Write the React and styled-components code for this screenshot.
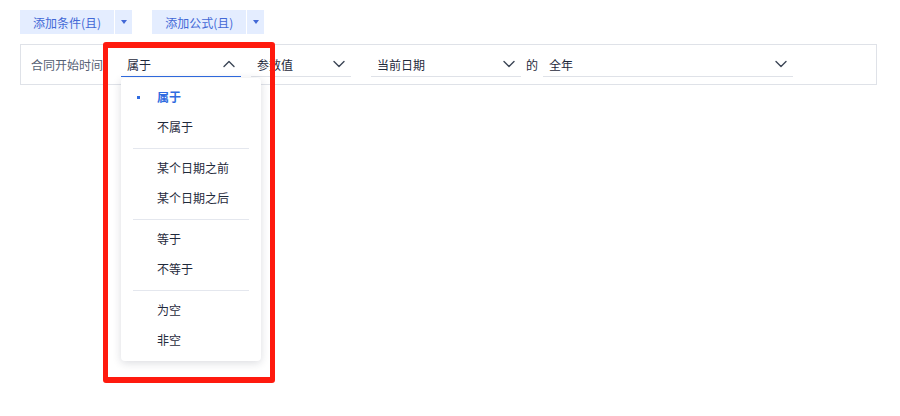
import React from "react";
import styled, { createGlobalStyle } from "styled-components";

const Global = createGlobalStyle`
  html, body { margin: 0; padding: 0; background: #fff; }
  body { font-family: "Noto Sans CJK SC", "Noto Sans", sans-serif; font-size: 12px; color: #1f2a3c; }
`;

const Page = styled.div`
  position: relative;
  padding: 10px 23px 0 20px;
  width: 900px;
  height: 416px;
  box-sizing: border-box;
`;

const Toolbar = styled.div`
  display: flex;
  gap: 20px;
  height: 24px;
`;

const SplitButton = styled.div`
  display: flex;
  gap: 1px;
  height: 24px;
`;

const MainPart = styled.button`
  all: unset;
  box-sizing: border-box;
  height: 24px;
  padding: 0 13px;
  background: #e4edff;
  color: #4268d6;
  font-size: 12px;
  display: flex;
  align-items: center;
  cursor: pointer;
`;

const ArrowPart = styled.button`
  all: unset;
  box-sizing: border-box;
  width: 17px;
  height: 24px;
  background: #e4edff;
  display: flex;
  align-items: center;
  justify-content: center;
  &::after {
    content: "";
    border-left: 3px solid transparent;
    border-right: 3px solid transparent;
    border-top: 4px solid #4268d6;
  }
`;

const FilterBox = styled.div`
  margin-top: 10px;
  height: 41px;
  box-sizing: border-box;
  border: 1px solid #dfe2e8;
  display: flex;
  align-items: center;
  padding-left: 10px;
`;

const Label = styled.span`
  color: #566175;
  font-size: 12px;
  width: 90px;
  flex: none;
`;

const Select = styled.div`
  position: relative;
  box-sizing: border-box;
  width: ${(p) => p.$w}px;
  margin-right: ${(p) => p.$mr || 0}px;
  height: 24px;
  padding: 0 6px;
  display: flex;
  align-items: center;
  justify-content: space-between;
  border-bottom: 1px solid ${(p) => (p.$open ? "#2f6be0" : "#dfe2e8")};
  font-size: 12px;
  color: #1f2a3c;
  flex: none;
`;

const Of = styled.span`
  margin-right: 5px;
  color: #1f2a3c;
  font-size: 12px;
`;

const Chevron = ({ up }) => (
  <svg width="12" height="12" viewBox="0 0 12 12" fill="none">
    <path
      d={up ? "M1 8.5 L6 3.5 L11 8.5" : "M1 3.5 L6 8.5 L11 3.5"}
      stroke="#3c4656"
      strokeWidth="1.4"
      strokeLinecap="round"
      strokeLinejoin="round"
    />
  </svg>
);

const Menu = styled.div`
  position: absolute;
  left: 0;
  top: calc(100% + 2px);
  width: 140px;
  box-sizing: border-box;
  background: #fff;
  border-radius: 4px;
  box-shadow: 0 2px 8px rgba(30, 40, 60, 0.16);
  padding: 4px 0 6px;
  z-index: 2;
`;

const Item = styled.div`
  position: relative;
  height: 30px;
  display: flex;
  align-items: center;
  padding-left: 36px;
  font-size: 12px;
  color: ${(p) => (p.$active ? "#2f6be0" : "#1f2a3c")};
  font-weight: ${(p) => (p.$active ? 700 : 400)};
  &::before {
    content: "";
    display: ${(p) => (p.$active ? "block" : "none")};
    position: absolute;
    left: 16px;
    top: 14px;
    width: 3px;
    height: 3px;
    background: #2f6be0;
  }
`;

const Divider = styled.div`
  height: 1px;
  background: #e4e7ee;
  margin: 6px 12px 4px;
`;

const Highlight = styled.div`
  position: absolute;
  left: 103px;
  top: 42px;
  width: 172px;
  height: 341px;
  box-sizing: border-box;
  border: solid #ff1a0e;
  border-width: 6px 5px;
  border-radius: 3px;
  pointer-events: none;
  z-index: 5;
`;

const groups = [
  ["属于", "不属于"],
  ["某个日期之前", "某个日期之后"],
  ["等于", "不等于"],
  ["为空", "非空"],
];

export default function App() {
  return (
    <Page>
      <Global />
      <Toolbar>
        <SplitButton>
          <MainPart>添加条件(且)</MainPart>
          <ArrowPart />
        </SplitButton>
        <SplitButton>
          <MainPart>添加公式(且)</MainPart>
          <ArrowPart />
        </SplitButton>
      </Toolbar>
      <FilterBox>
        <Label>合同开始时间</Label>
        <Select $w={120} $mr={10} $open>
          <span>属于</span>
          <Chevron up />
          <Menu>
            {groups.map((g, gi) => (
              <React.Fragment key={gi}>
                {gi > 0 && <Divider />}
                {g.map((t) => (
                  <Item key={t} $active={t === "属于"}>
                    {t}
                  </Item>
                ))}
              </React.Fragment>
            ))}
          </Menu>
        </Select>
        <Select $w={100} $mr={20}>
          <span>参数值</span>
          <Chevron />
        </Select>
        <Select $w={150} $mr={5}>
          <span>当前日期</span>
          <Chevron />
        </Select>
        <Of>的</Of>
        <Select $w={250}>
          <span>全年</span>
          <Chevron />
        </Select>
      </FilterBox>
      <Highlight />
    </Page>
  );
}
